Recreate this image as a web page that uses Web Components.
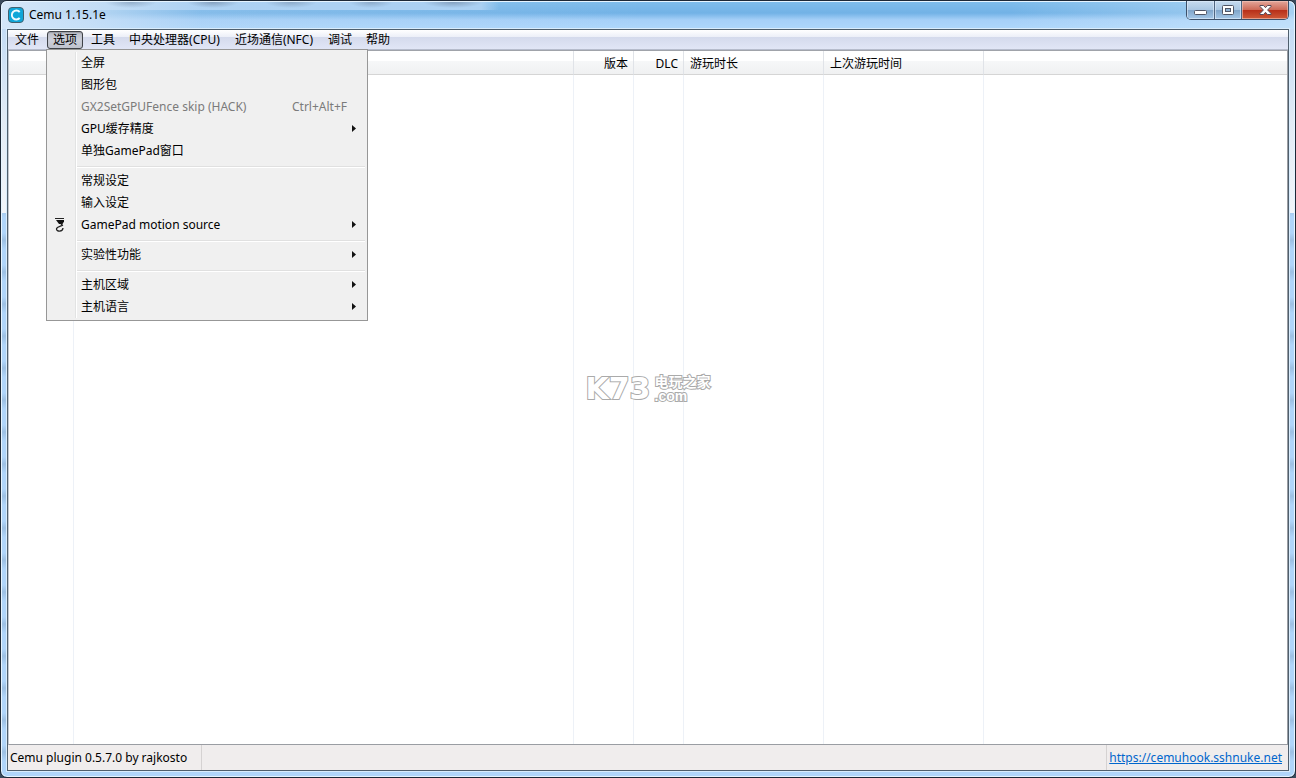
<!DOCTYPE html>
<html lang="zh-CN">
<head>
<meta charset="utf-8">
<title>Cemu 1.15.1e</title>
<style>
html, body { height: 100%; margin: 0; background: #3a4a5c; }
body { font: 12px/16px "Noto Sans", "Noto Sans CJK SC", sans-serif; color: #000; overflow: hidden; }
</style>
</head>
<body>
<app-window>
  <title-bar slot="title">Cemu 1.15.1e</title-bar>
  <menu-bar>
    <bar-item>文件</bar-item>
    <bar-item open>选项
      <drop-menu slot="menu">
        <menu-entry>全屏</menu-entry>
        <menu-entry>图形包</menu-entry>
        <menu-entry disabled shortcut="Ctrl+Alt+F">GX2SetGPUFence skip (HACK)</menu-entry>
        <menu-entry submenu>GPU缓存精度</menu-entry>
        <menu-entry>单独GamePad窗口</menu-entry>
        <menu-rule></menu-rule>
        <menu-entry>常规设定</menu-entry>
        <menu-entry>输入设定</menu-entry>
        <menu-entry submenu hook>GamePad motion source</menu-entry>
        <menu-rule></menu-rule>
        <menu-entry submenu>实验性功能</menu-entry>
        <menu-rule></menu-rule>
        <menu-entry submenu>主机区域</menu-entry>
        <menu-entry submenu>主机语言</menu-entry>
      </drop-menu>
    </bar-item>
    <bar-item>工具</bar-item>
    <bar-item wide>中央处理器(CPU)</bar-item>
    <bar-item wide>近场通信(NFC)</bar-item>
    <bar-item>调试</bar-item>
    <bar-item>帮助</bar-item>
  </menu-bar>
  <game-list></game-list>
  <status-bar>Cemu plugin 0.5.7.0 by rajkosto</status-bar>
  <site-mark slot="overlay"></site-mark>
</app-window>
<script>
const define = (name, html, setup) => customElements.define(name, class extends HTMLElement {
  constructor() {
    super();
    this.attachShadow({ mode: 'open' }).innerHTML = html;
    if (setup) setup(this, this.shadowRoot);
  }
});

define('app-window', `
<style>
:host { display: flex; flex-direction: column; box-sizing: border-box; height: 100vh; position: relative;
  padding: 0 6px 6px; border: 1px solid #1d2836; border-radius: 7px; overflow: hidden;
  box-shadow: inset 0 0 0 1px #e6f4ff;
  background:
    linear-gradient(#c4dcf5 29px, #e2ebf5 120px, #f1f5fa 212px, transparent 212px),
    repeating-linear-gradient(#b0d5fa 0 8px, #9dc0e3 15px, #b0d5fa 24px 32px); }
.client { flex: 1; min-height: 0; display: flex; flex-direction: column; border: 1px solid #4f5f6d;
  box-shadow: 0 0 0 1px #d9ecfc; background: #fff; }
</style>
<slot name="title"></slot>
<div class="client"><slot></slot></div>
<slot name="overlay"></slot>`);

define('title-bar', `
<style>
:host { display: flex; height: 28px; margin: 0 -6px; padding: 0 6px 0 7px; align-items: flex-start;
  border-radius: 6px 6px 0 0; box-shadow: inset 0 1px #e6f4ff, inset 1px 0 #e6f4ff, inset -1px 0 #e6f4ff;
  background:
    radial-gradient(ellipse 26px 6px at 130px 1px, #6f87a488, transparent),
    radial-gradient(ellipse 26px 6px at 212px 1px, #6f87a4aa, transparent),
    radial-gradient(ellipse 26px 6px at 290px 1px, #6f87a488, transparent),
    radial-gradient(ellipse 22px 6px at 370px 1px, #6f87a488, transparent),
    radial-gradient(ellipse 30px 6px at 452px 1px, #6f87a4aa, transparent),
    linear-gradient(90deg, #d4e6f8 0, #cfe3f7bb 90px, #b9d7f344 200px, transparent 50%, transparent 78%, #d3eafb88 100%),
    linear-gradient(90deg, #a9cff2 480px, transparent 498px) 0 0 / 100% 9px no-repeat,
    linear-gradient(#80bdeb, #72b2e6 12px, #a6d0f8 19px, #aed7fb); }
.caption { display: flex; gap: 5px; align-items: center; flex: 1; height: 27px; }
svg { display: block; }
.buttons { display: flex; height: 18px; border: 1px solid #3c5069; border-top: 0; border-radius: 0 0 5px 5px; overflow: hidden; }
button { width: 28px; padding: 0; border: 0; border-right: 1px solid #4f6580; display: grid; place-items: center;
  background: linear-gradient(#c6dbef, #a9c6e2 9px, #7fa4c9 9px, #a5c8e8); box-shadow: inset 1px 1px #e2effb99, inset -1px -1px #e2effb99; }
.max { width: 27px; }
.close { width: 46px; border: 0; background: linear-gradient(#e3a79b, #cd6855 9px, #b72e18 9px, #cf5a38); box-shadow: inset 1px 1px #f3c8bd99, inset -1px -1px #f3c8bd99; }
</style>
<div class="caption">
<svg width="16" height="16" viewBox="0 0 16 16"><rect x=".5" y=".5" width="15" height="15" rx="3.5" fill="#0fa6d8" stroke="#42616f"/><path d="M11.700 5A4.500 4.500 0 1 0 11.700 11" fill="none" stroke="#effaff" stroke-width="1.900"/></svg>
<span><slot></slot></span></div>
<div class="buttons">
<button aria-label="最小化"><svg width="13" height="12"><rect x=".5" y="6.5" width="12" height="4" rx="1" fill="#fff" stroke="#505565"/></svg></button>
<button class="max" aria-label="最大化"><svg width="13" height="12"><rect x=".5" y="1.500" width="11" height="9" rx="1" fill="#fff" stroke="#505565"/><rect x="3.500" y="4.500" width="5" height="3" fill="#8fb2d3" stroke="#505565"/></svg></button>
<button class="close" aria-label="关闭"><svg width="13" height="12"><path d="M1 1.500h3.500l2 2.200 2-2.200H12v1L8.600 6l3.400 3.500v1H8.500l-2-2.200-2 2.200H1v-1L4.400 6 1 2.500z" fill="#fff" stroke="#554a58"/></svg></button>
</div>`);

define('menu-bar', `
<style>
:host { display: flex; height: 20px; box-sizing: border-box; border-bottom: 1px solid #b6bccc;
  background: linear-gradient(#fff, #eceff8 7px, #d4daec 7px, #e1e6f6); }
</style><slot></slot>`);

define('bar-item', `
<style>
:host { display: block; position: relative; }
button { display: block; height: 19px; padding: 0 7px; border: 0; background: none; font: inherit; color: inherit; white-space: nowrap; }
:host([wide]) button { padding-right: 8px; }
:host([open]) button { height: 18px; margin: 1px 1px 0; padding: 0 5px; line-height: 14px; border: 1px solid #3f4247; border-radius: 3px;
  background: linear-gradient(#babdc6, #cdd0da 8px, #bfc2cd); box-shadow: inset 0 1px 1px #85889099; }
::slotted(drop-menu) { position: absolute; top: 19px; left: 0; z-index: 5; }
</style>
<button><slot></slot></button><slot name="menu"></slot>`);

define('drop-menu', `
<style>
:host { display: block; box-sizing: border-box; width: 322px; padding: 2px; border: 1px solid #979797;
  background: linear-gradient(90deg, transparent 26px, #e2e3e3 26px 27px, #fff 27px 28px, transparent 28px) content-box, #f0f0f0; }
</style><div role="menu"><slot></slot></div>`);

define('menu-entry', `
<style>
:host { display: block; }
button { display: grid; grid-template-columns: 32px 1fr auto 18px; align-items: center; width: 100%; height: 22px; padding: 0; border: 0;
  background: none; font: inherit; color: inherit; text-align: left; white-space: nowrap; }
button:disabled { color: #7b7b7b; }
svg { display: none; }
:host([hook]) .hook, :host([submenu]) .arrow { display: block; }
.hook { margin-left: 5px; }
.arrow { margin-left: 5px; }
</style>
<button role="menuitem"><span><svg class="hook" width="14" height="16" viewBox="0 0 14 16"><path d="M1 1.500h9" stroke="#222"/><path d="M2 3h8v1.500L8.500 7H5z" fill="#111"/><path d="M7 6.500L8.300 8.300C6 9.200 2.500 10 2.500 12c0 3 6.200 3 6.500-1" fill="none" stroke="#222" stroke-width="1.300"/></svg></span>
<span><slot></slot></span><span class="key"></span><span><svg class="arrow" width="5" height="8"><path d="M0 0l4 3.500L0 7z" fill="#111"/></svg></span></button>`,
(el, root) => {
  root.querySelector('button').disabled = el.hasAttribute('disabled');
  root.querySelector('.key').textContent = el.getAttribute('shortcut') || '';
});

define('menu-rule', `
<style>
:host { display: block; height: 8px; padding-left: 28px; }
hr { margin: 0; border: 0; height: 8px; background: linear-gradient(transparent 4px, #e0e0e0 4px 5px, #fff 5px 6px, transparent 6px); }
</style><hr>`);

define('game-list', `
<style>
:host { display: flex; flex: 1; min-height: 0; border: 1px solid #9a9da3; border-left-color: #c3c8d0; border-top-color: #a0a3aa; background: #fff; }
table { width: 100%; height: 100%; table-layout: fixed; border-collapse: separate; border-spacing: 0; }
th, td { box-sizing: border-box; padding: 0 5px; }
th { height: 24px; padding: 2px 5px 0 6px; font-weight: 400; text-align: left; border-bottom: 1px solid #d5d5d5; border-right: 1px solid #e0e3e8;
  background: linear-gradient(#fff 10px, #f6f7f8 10px, #f0f1f2); }
td { border-right: 1px solid #edf1f7; }
th:last-child, td:last-child { border-right: 0; }
.num { text-align: right; }
</style>
<table>
<colgroup><col style="width:65px"><col style="width:500px"><col style="width:60px"><col style="width:50px"><col style="width:140px"><col style="width:160px"><col></colgroup>
<thead><tr><th></th><th></th><th class="num">版本</th><th class="num">DLC</th><th>游玩时长</th><th>上次游玩时间</th><th></th></tr></thead>
<tbody><tr><td></td><td></td><td></td><td></td><td></td><td></td><td></td></tr></tbody>
</table>`);

define('status-bar', `
<style>
:host { display: flex; height: 25px; justify-content: space-between; align-items: stretch; background: #f0eded; line-height: 26px; }
span { min-width: 184px; padding: 0 7px 0 2px; border-right: 1px solid #d5d2d2; }
div { padding: 0 6px 0 2px; border-left: 1px solid #d5d2d2; }
a { color: #0066cc; text-decoration: underline; }
</style>
<span><slot></slot></span><div><a href="https://cemuhook.sshnuke.net">https://cemuhook.sshnuke.net</a></div>`);

define('site-mark', `
<style>
:host { position: absolute; inset: 0; display: flex; align-items: center; justify-content: center; gap: 4px; pointer-events: none;
  color: #fff; font-family: "DejaVu Sans", "Noto Sans CJK SC", sans-serif; font-weight: 700; -webkit-text-stroke: 2px #aaa; paint-order: stroke fill; }
b { font-size: 30px; line-height: 30px; }
span { display: grid; font: 700 14px/14px "Liberation Sans", "Noto Sans CJK SC", sans-serif; }
</style>
<b>K73</b><span><span>电玩之家</span><span>.com</span></span>`);
</script>
</body>
</html>
